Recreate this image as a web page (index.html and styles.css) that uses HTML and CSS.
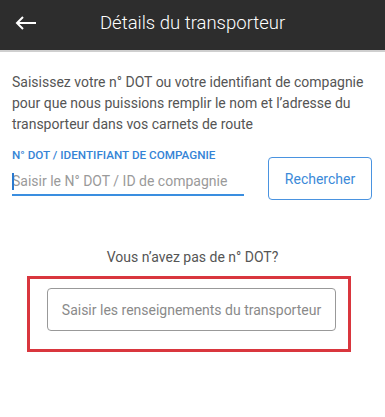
FILE: index.html
```html
<!DOCTYPE html>
<html>
<head>
    <link rel="stylesheet" href="styles.css">
</head>
<body>
    <div class="topbar">
        <svg class="back" width="22" height="14" viewBox="0 0 22 14">
            <path d="M21 7H2M8 1L2 7l6 6" fill="none" stroke="#fff" stroke-width="2"/>
        </svg>
        <div class="title">Détails du transporteur</div>
    </div>

    <p class="intro">Saisissez votre n° DOT ou votre identifiant de compagnie pour que nous puissions remplir le nom et l’adresse du transporteur dans vos carnets de route</p>

    <div class="search-row">
        <div class="field">
            <label for="dot">N° DOT / IDENTIFIANT DE COMPAGNIE</label>
            <div class="input-wrap">
                <input type="text" id="dot" placeholder="Saisir le N° DOT / ID de compagnie">
            </div>
        </div>
        <button class="btn-search">Rechercher</button>
    </div>

    <p class="no-dot">Vous n’avez pas de n° DOT?</p>

    <div class="highlight">
        <button class="btn-manual">Saisir les renseignements du transporteur</button>
    </div>
</body>
</html>
```

FILE: styles.css
```css
body {
    margin: 0;
    font-family: Roboto, "Noto Sans", sans-serif;
    background: #fff;
}
.topbar {
    box-sizing: border-box;
    height: 52px;
    padding-bottom: 4px;
    background: #2d2d2d;
    border-bottom: 2px solid #cfcfcf;
    display: flex;
    align-items: center;
}
.back {
    margin-left: 15px;
}
.title {
    margin-left: 63px;
    color: #fff;
    font-size: 18.5px;
    font-weight: 300;
}
.intro {
    margin: 20px 12px 0;
    font-size: 14px;
    line-height: 21px;
    color: #555;
}
.search-row {
    display: flex;
    align-items: flex-start;
    margin: 14px 12px 0;
}
.field {
    width: 232px;
}
label {
    display: block;
    font-size: 11.7px;
    line-height: 13px;
    font-weight: 500;
    color: #3584d6;
}
.input-wrap {
    position: relative;
}
.input-wrap::before {
    content: "";
    position: absolute;
    left: 0;
    top: 11px;
    width: 2px;
    height: 17px;
    background: #2a7ad0;
}
input {
    box-sizing: border-box;
    width: 100%;
    height: 34px;
    padding: 5px 0 0;
    border: none;
    border-bottom: 2px solid #3a8ee0;
    font-family: inherit;
    font-size: 14px;
    color: #333;
    outline: none;
}
input::placeholder {
    color: #9a9a9a;
}
.btn-search {
    box-sizing: border-box;
    margin: 8px 0 0 24px;
    padding: 0;
    width: 104px;
    height: 43px;
    background: #fff;
    border: 1px solid #4a93e0;
    border-radius: 4px;
    font-family: inherit;
    font-size: 14px;
    color: #3b8ad9;
}
.no-dot {
    margin: 47px 0 0;
    text-align: center;
    font-size: 14px;
    line-height: 20px;
    color: #555;
}
.highlight {
    box-sizing: border-box;
    margin: 9px 0 0 27px;
    width: 324px;
    height: 76px;
    border: 3px solid #d9363e;
    padding: 9px 0 0 17px;
}
.btn-manual {
    box-sizing: border-box;
    padding: 0;
    width: 289px;
    height: 43px;
    background: #fff;
    border: 1px solid #999;
    border-radius: 4px;
    font-family: inherit;
    font-size: 14px;
    color: #8a8a8a;
}
```
